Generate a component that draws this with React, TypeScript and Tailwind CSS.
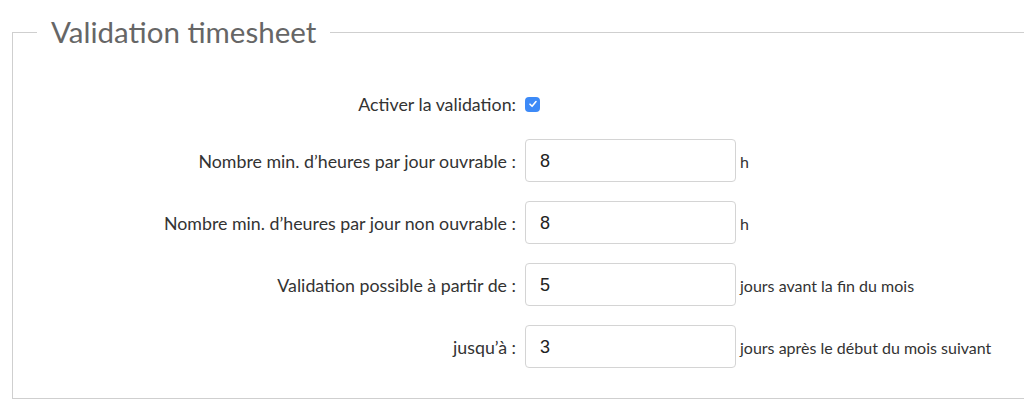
import React from "react";

const rows = [
  { label: "Nombre min. d’heures par jour ouvrable :", value: "8", suffix: "h" },
  { label: "Nombre min. d’heures par jour non ouvrable :", value: "8", suffix: "h" },
  { label: "Validation possible à partir de :", value: "5", suffix: "jours avant la fin du mois" },
  { label: "jusqu’à :", value: "3", suffix: "jours après le début du mois suivant" },
];

const App = () => {
  return (
    <div className="h-[410px] w-[1024px] overflow-hidden bg-white pt-[15px] font-['Lato',sans-serif]">
      <fieldset className="ml-[12px] w-[1040px] border border-[#cfcfcf] pl-[24px] pb-[30px]">
        <legend className="px-[14px] text-[29.5px] leading-[34px] text-[#666666]">
          Validation timesheet
        </legend>

        <div className="mt-[45px] flex h-[20px] items-center">
          <label className="w-[488px] pr-[9px] text-right text-[17.8px] leading-[22px] text-[#333333]">
            Activer la validation:
          </label>
          <div className="flex h-[15px] w-[15px] items-center justify-center rounded-[4px] bg-[#3d8af7]">
            <svg width="10" height="10" viewBox="0 0 10 10" fill="none">
              <path
                d="M2 5.2 L4.1 7.3 L8 2.6"
                stroke="white"
                strokeWidth="1.6"
                strokeLinecap="round"
                strokeLinejoin="round"
              />
            </svg>
          </div>
        </div>

        <div className="mt-[25px] flex flex-col gap-[19px]">
          {rows.map((row, index) => (
            <div key={index} className="flex h-[43px] items-center">
              <label className="w-[488px] pr-[9px] text-right text-[17.8px] leading-[22px] text-[#333333]">
                {row.label}
              </label>
              <div className="flex h-[43px] w-[211px] items-center rounded-[4px] border border-[#d4d4d4] px-[14px] pt-[2px] font-['Liberation_Sans',sans-serif] text-[18px] text-[#222222]">
                {row.value}
              </div>
              <span className="pl-[4px] pt-[3px] text-[16px] text-[#333333]">{row.suffix}</span>
            </div>
          ))}
        </div>
      </fieldset>
    </div>
  );
};

export default App;
